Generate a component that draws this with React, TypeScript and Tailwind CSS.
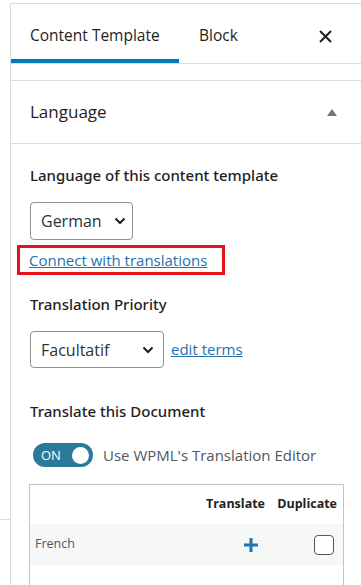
import React from "react";

const font = { fontFamily: '"Open Sans", "Noto Sans", sans-serif' };
const labelFont = { fontFamily: '"Noto Sans", "Open Sans", sans-serif' };

function Chevron() {
  return (
    <svg width="12" height="8" viewBox="0 0 12 8" fill="none">
      <path d="M1.5 1.5 L6 6 L10.5 1.5" stroke="#1e1e1e" strokeWidth="2" />
    </svg>
  );
}

const App: React.FC = () => {
  return (
    <div
      className="w-[361px] h-[585px] bg-white overflow-hidden flex pt-[3px] text-[#1e1e1e]"
      style={font}
    >
      {/* left gutter */}
      <div className="w-[10px] shrink-0">
        <div className="h-[517px] border-b border-[#dcdcde]" />
      </div>

      <div className="flex-1 border-l border-t border-[#dcdcde] flex flex-col">
        {/* tabs */}
        <div className="h-[60px] shrink-0 flex items-stretch border-b border-[#dcdcde]">
          <div className="w-[168px] relative flex items-center pl-[19px] pt-[5px] text-[15.5px]">
            Content Template
            <div className="absolute left-0 right-0 bottom-0 h-[4px] bg-[#007cba]" />
          </div>
          <div className="flex items-center pl-[20px] pt-[5px] text-[15.5px]">Block</div>
          <div className="flex-1" />
          <div className="flex items-center pr-[30px] pt-[5px]">
            <svg width="13" height="13" viewBox="0 0 13 13">
              <path d="M1 1 L12 12 M12 1 L1 12" stroke="#1e1e1e" strokeWidth="2" />
            </svg>
          </div>
        </div>

        <div className="h-[16px] shrink-0" />

        <div className="flex-1 border-t border-r border-[#dcdcde] flex flex-col">
          {/* panel header */}
          <div className="h-[63px] shrink-0 flex items-center justify-between pl-[19px] pr-[24px] border-b border-[#dcdcde]">
            <span className="text-[17px]">Language</span>
            <svg width="10" height="7" viewBox="0 0 10 7">
              <path d="M0 7 L5 0 L10 7 Z" fill="#757575" />
            </svg>
          </div>

          {/* panel body */}
          <div className="pl-[19px] pr-[17px] flex flex-col">
            <div className="mt-[21px] text-[15px] font-medium leading-[20px]" style={labelFont}>
              Language of this content template
            </div>

            <div className="mt-[17px] w-[103px] h-[38px] border border-[#8c8f94] rounded-[4px] flex items-center justify-between pl-[10px] pr-[6px] text-[16px] text-[#2c3338]">
              German
              <Chevron />
            </div>

            <div className="mt-[5px] -ml-[13px] w-[208px] h-[30px] border-[3px] border-[#e5141b] flex items-center pl-[9px]">
              <a className="text-[15px] text-[#2271b1] underline leading-[20px]" href="#">
                Connect with translations
              </a>
            </div>

            <div className="mt-[19px] text-[15px] font-medium leading-[20px]" style={labelFont}>
              Translation Priority
            </div>

            <div className="mt-[17px] flex items-center gap-[7px]">
              <div className="w-[134px] h-[37px] border border-[#8c8f94] rounded-[4px] flex items-center justify-between pl-[10px] pr-[9px] text-[16px] text-[#2c3338]">
                Facultatif
                <Chevron />
              </div>
              <a className="text-[15px] text-[#2271b1] underline leading-[20px] -mt-[2px]" href="#">
                edit terms
              </a>
            </div>

            <div className="mt-[33px] text-[15px] font-medium leading-[20px]" style={labelFont}>
              Translate this Document
            </div>

            <div className="mt-[22px] ml-[3px] flex items-center gap-[10px]">
              <div className="w-[60px] h-[24px] rounded-full bg-[#2a7a98] flex items-center justify-between pl-[8px] pr-[4px]">
                <span className="text-[13px] text-white leading-none">ON</span>
                <div className="w-[17px] h-[17px] rounded-full bg-white" />
              </div>
              <span className="text-[15px] text-[#50575e]">Use WPML's Translation Editor</span>
            </div>

            {/* table */}
            <div className="mt-[17px] -ml-[1px] w-[315px] border border-[#c3c4c7] border-b-0">
              <div className="h-[39px] flex items-center justify-end text-[12.5px] font-bold">
                <span className="w-[70px] text-right pr-[3px]">Translate</span>
                <span className="w-[75px] text-right pr-[6px]">Duplicate</span>
              </div>
              <div className="h-[41px] bg-[#f6f7f7] flex items-center text-[12.5px] text-[#50575e]">
                <span className="pl-[5px] flex-1">French</span>
                <div className="w-[70px] flex justify-end pr-[10px]">
                  <svg width="14" height="14" viewBox="0 0 14 14">
                    <path d="M7 0 V14 M0 7 H14" stroke="#2271b1" strokeWidth="3" />
                  </svg>
                </div>
                <div className="w-[75px] flex justify-end pr-[9px]">
                  <div className="w-[20px] h-[20px] border border-[#50575e] rounded-[4px] bg-white" />
                </div>
              </div>
              <div className="h-[40px]" />
            </div>
          </div>
        </div>
      </div>
    </div>
  );
};

export default App;
